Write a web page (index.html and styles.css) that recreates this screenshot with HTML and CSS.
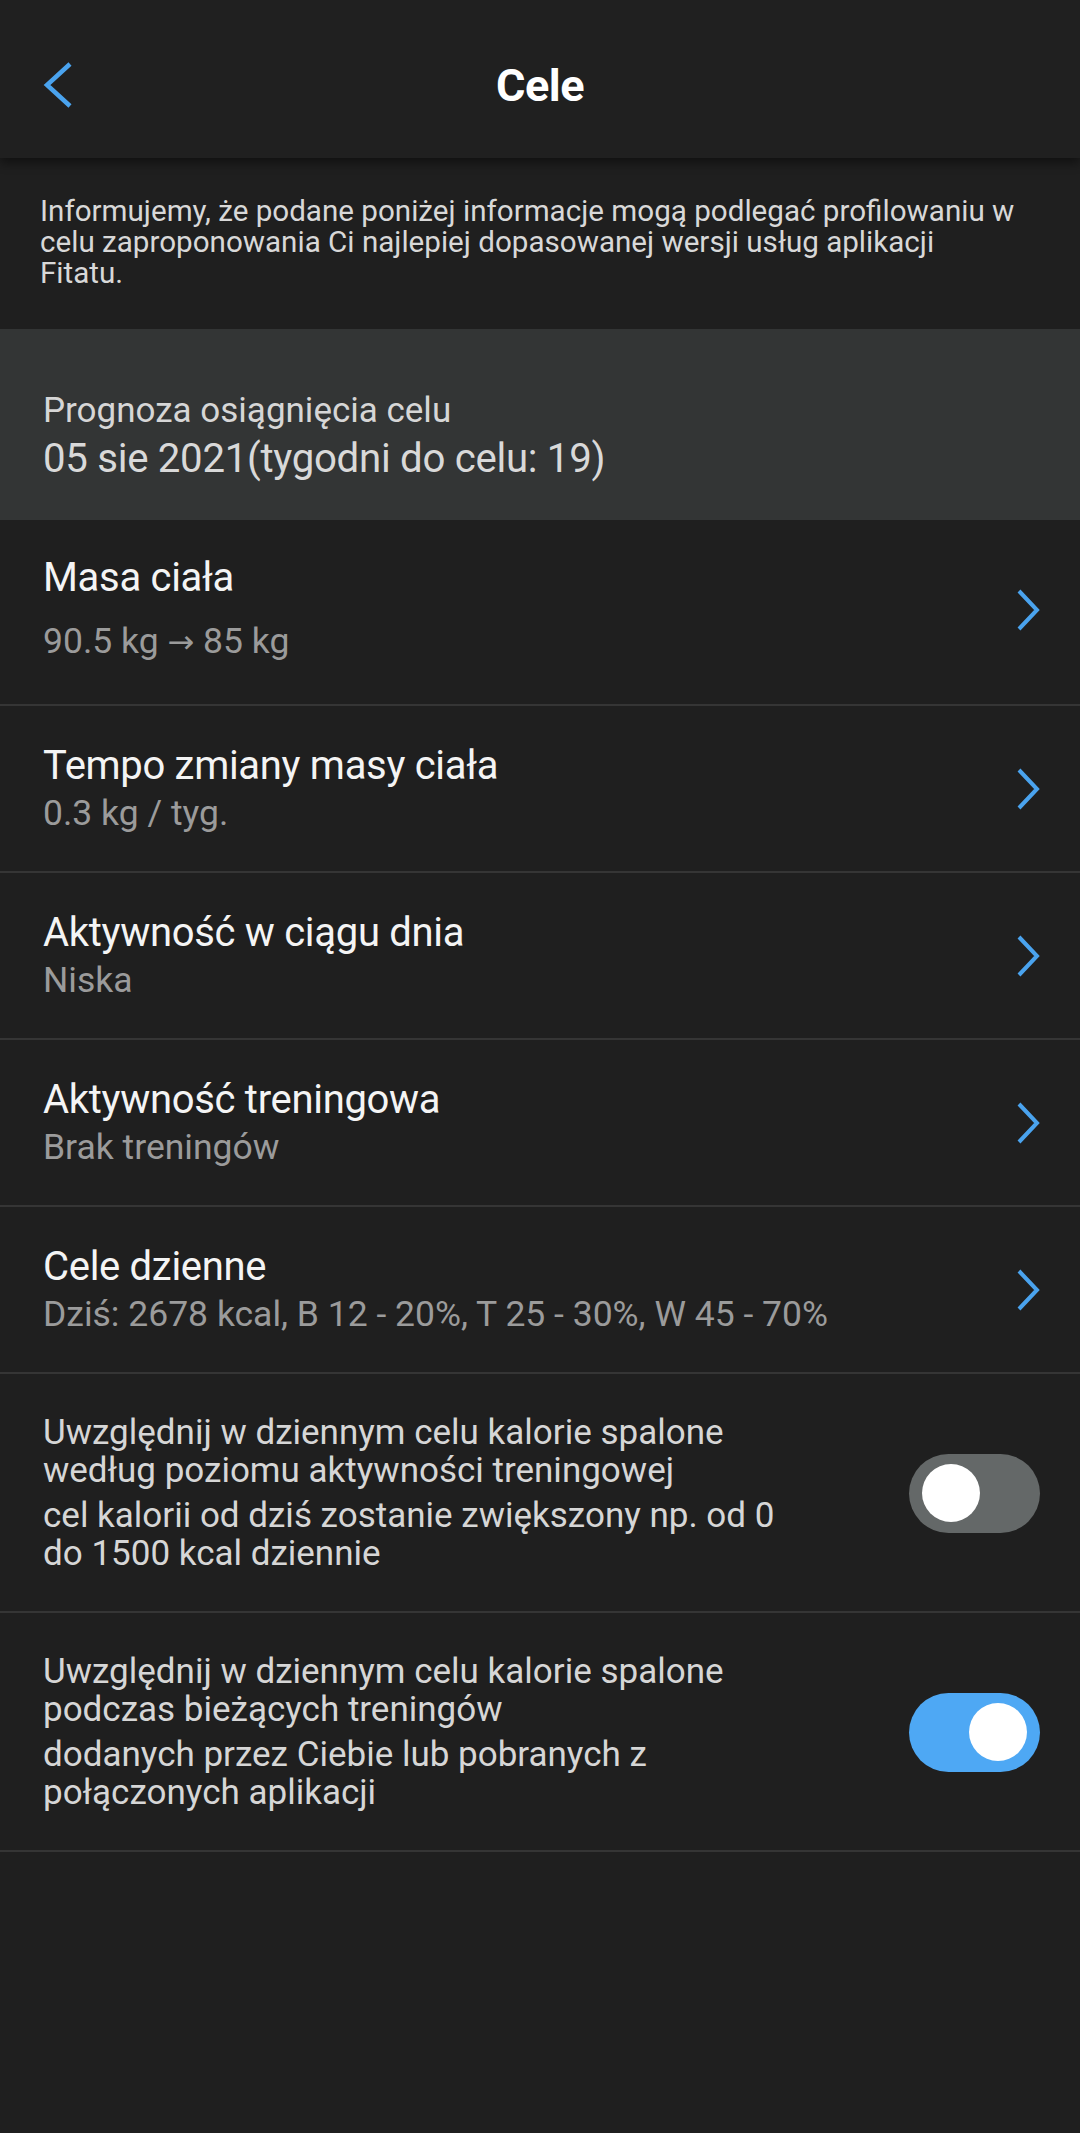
FILE: index.html
```html
<!DOCTYPE html>
<html lang="pl">
<head>
<meta charset="utf-8">
<title>Cele</title>
<link rel="stylesheet" href="styles.css">
</head>
<body>
<div class="screen">
  <header class="topbar">
    <svg class="back" viewBox="0 0 30 46" width="30" height="46"><path d="M27 2 L4 23 L27 44" fill="none" stroke="#4aa3ee" stroke-width="4.5" stroke-linejoin="miter"/></svg>
    <h1 class="title">Cele</h1>
  </header>

  <p class="info">Informujemy, że podane poniżej informacje mogą podlegać profilowaniu w<br>celu zaproponowania Ci najlepiej dopasowanej wersji usług aplikacji<br>Fitatu.</p>

  <section class="forecast">
    <div class="forecast-label">Prognoza osiągnięcia celu</div>
    <div class="forecast-value">05 sie 2021(tygodni do celu: 19)</div>
  </section>

  <div class="row row-first">
    <div class="row-text">
      <div class="row-title">Masa ciała</div>
      <div class="row-sub">90.5 kg <span class="arrow">→</span> 85 kg</div>
    </div>
    <svg class="chev" viewBox="0 0 24 42" width="24" height="42"><path d="M3 2 L21 21 L3 40" fill="none" stroke="#4aa3ee" stroke-width="4"/></svg>
  </div>

  <div class="row">
    <div class="row-text">
      <div class="row-title">Tempo zmiany masy ciała</div>
      <div class="row-sub">0.3 kg / tyg.</div>
    </div>
    <svg class="chev" viewBox="0 0 24 42" width="24" height="42"><path d="M3 2 L21 21 L3 40" fill="none" stroke="#4aa3ee" stroke-width="4"/></svg>
  </div>

  <div class="row">
    <div class="row-text">
      <div class="row-title">Aktywność w ciągu dnia</div>
      <div class="row-sub">Niska</div>
    </div>
    <svg class="chev" viewBox="0 0 24 42" width="24" height="42"><path d="M3 2 L21 21 L3 40" fill="none" stroke="#4aa3ee" stroke-width="4"/></svg>
  </div>

  <div class="row">
    <div class="row-text">
      <div class="row-title">Aktywność treningowa</div>
      <div class="row-sub">Brak treningów</div>
    </div>
    <svg class="chev" viewBox="0 0 24 42" width="24" height="42"><path d="M3 2 L21 21 L3 40" fill="none" stroke="#4aa3ee" stroke-width="4"/></svg>
  </div>

  <div class="row">
    <div class="row-text">
      <div class="row-title">Cele dzienne</div>
      <div class="row-sub">Dziś: 2678 kcal, B 12 - 20%, T 25 - 30%, W 45 - 70%</div>
    </div>
    <svg class="chev" viewBox="0 0 24 42" width="24" height="42"><path d="M3 2 L21 21 L3 40" fill="none" stroke="#4aa3ee" stroke-width="4"/></svg>
  </div>

  <div class="row row-toggle">
    <div class="row-text">
      <p class="toggle-text">Uwzględnij w dziennym celu kalorie spalone<br>według poziomu aktywności treningowej</p>
      <p class="toggle-text">cel kalorii od dziś zostanie zwiększony np. od 0<br>do 1500 kcal dziennie</p>
    </div>
    <div class="switch"><span class="knob"></span></div>
  </div>

  <div class="row row-toggle">
    <div class="row-text">
      <p class="toggle-text">Uwzględnij w dziennym celu kalorie spalone<br>podczas bieżących treningów</p>
      <p class="toggle-text">dodanych przez Ciebie lub pobranych z<br>połączonych aplikacji</p>
    </div>
    <div class="switch switch-on"><span class="knob"></span></div>
  </div>
</div>
</body>
</html>
```

FILE: styles.css
```css
* { box-sizing: border-box; }
html, body {
  margin: 0;
  padding: 0;
  background: #1f1f1f;
}
body {
  font-family: Roboto, "Noto Sans", "Liberation Sans", sans-serif;
  color: #f2f2f2;
}
.screen {
  width: 1080px;
  min-height: 2133px;
  background: #1f1f1f;
}
.topbar {
  position: relative;
  z-index: 2;
  height: 158px;
  background: #202020;
  display: flex;
  align-items: center;
  justify-content: center;
  box-shadow: 0 5px 10px rgba(0, 0, 0, 0.45);
}
.back {
  position: absolute;
  left: 43px;
  top: 62px;
}
.title {
  margin: 0;
  font-size: 45px;
  font-weight: 700;
  color: #ffffff;
  letter-spacing: -0.5px;
  padding-top: 12px;
}
.info {
  margin: 0;
  padding: 38px 40px 40px 40px;
  font-size: 29.6px;
  line-height: 31px;
  color: #d8d8d8;
  white-space: nowrap;
}
.forecast {
  background: #333535;
  padding: 60px 43px 35px 43px;
}
.forecast-label {
  font-size: 35px;
  line-height: 44px;
  color: #d6d6d6;
}
.forecast-value {
  font-size: 40.2px;
  line-height: 52px;
  color: #d9d9d9;
  letter-spacing: -0.3px;
}
.row {
  display: flex;
  align-items: center;
  padding: 36px 40px 35px 43px;
  border-bottom: 2px solid #353535;
}
.row-first {
  padding-top: 34px;
  padding-bottom: 39px;
}
.row-first .row-sub {
  margin-top: 16px;
}
.row-text {
  flex: 1;
  min-width: 0;
}
.row-title {
  font-size: 40px;
  line-height: 48px;
  color: #f4f4f4;
  letter-spacing: -0.3px;
}
.row-sub {
  font-size: 35.5px;
  line-height: 46px;
  color: #9b9b9b;
  white-space: nowrap;
}
.arrow {
  font-family: "DejaVu Sans", sans-serif;
  font-size: 32px;
}
.chev {
  flex: none;
  display: block;
}
.row-toggle {
  padding-top: 40px;
  padding-bottom: 38px;
}
.toggle-text {
  margin: 0;
  font-size: 35px;
  line-height: 38px;
  color: #d6d6d6;
  white-space: nowrap;
}
.toggle-text + .toggle-text {
  margin-top: 7px;
}
.switch {
  flex: none;
  position: relative;
  width: 131px;
  height: 79px;
  border-radius: 40px;
  background: #646868;
}
.knob {
  position: absolute;
  top: 10px;
  left: 13px;
  width: 58px;
  height: 58px;
  border-radius: 50%;
  background: #ffffff;
}
.switch-on {
  background: #4ea8f4;
}
.switch-on .knob {
  left: auto;
  right: 13px;
}
```
